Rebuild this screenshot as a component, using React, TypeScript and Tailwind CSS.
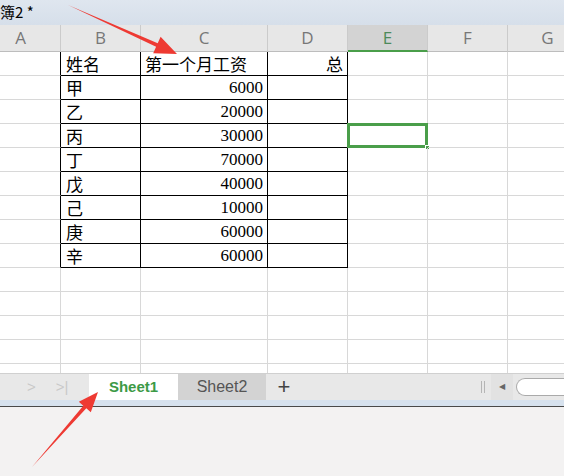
import React from "react";

const cols = [
  { name: "A", w: 80 },
  { name: "B", w: 80 },
  { name: "C", w: 127 },
  { name: "D", w: 80 },
  { name: "E", w: 80 },
  { name: "F", w: 80 },
  { name: "G", w: 80 },
];

const data: string[][] = [
  ["姓名", "第一个月工资", "总"],
  ["甲", "6000"],
  ["乙", "20000"],
  ["丙", "30000"],
  ["丁", "70000"],
  ["戊", "40000"],
  ["己", "10000"],
  ["庚", "60000"],
  ["辛", "60000"],
];

const ROWS = 14;
const cjk = "font-['Noto_Sans_CJK_SC',sans-serif]";

// table sits on columns B..D, rows 0..8
const inTable = (r: number, c: number) => r >= 0 && r <= 8 && c >= 1 && c <= 3;

function Cell({ r, c }: { r: number; c: number }) {
  const rightBlack = inTable(r, c) || inTable(r, c + 1);
  const bottomBlack = inTable(r, c) || inTable(r + 1, c);
  const row = data[r];
  let content: React.ReactNode = null;
  if (row && c === 1) {
    content = <span className={`${cjk} pl-[5px] text-[17px] leading-none text-black`}>{row[0]}</span>;
  } else if (row && c === 2) {
    content =
      r === 0 ? (
        <span className={`${cjk} pl-[4px] text-[17px] leading-none text-black`}>{row[1]}</span>
      ) : (
        <span className="ml-auto pr-[4px] font-['Liberation_Serif',serif] text-[17px] leading-none text-black">
          {row[1]}
        </span>
      );
  } else if (row && c === 3 && r === 0) {
    content = <span className={`${cjk} ml-auto pr-[4px] text-[17px] leading-none text-black`}>{row[2]}</span>;
  }
  const selected = r === 3 && c === 4;
  return (
    <div
      className={`relative flex h-[24px] shrink-0 items-end pb-[3px] border-r border-b ${
        rightBlack ? "border-r-black" : "border-r-[#d8d8d8]"
      } ${bottomBlack ? "border-b-black" : "border-b-[#d8d8d8]"}`}
      style={{ width: cols[c].w }}
    >
      {content}
      {selected ? (
        <>
          <div className="absolute -left-[1px] -top-[1px] h-[25px] w-[81px] border-[3px] border-[#4a9e4a]" />
          <div className="absolute -bottom-[3px] -right-[3px] h-[5px] w-[5px] border border-white bg-[#4a9e4a]" />
        </>
      ) : null}
    </div>
  );
}

export default function App() {
  return (
    <div className="relative h-[476px] w-[564px] overflow-hidden bg-[#f3f2f2] font-['Liberation_Sans',sans-serif]">
      {/* title bar */}
      <div className="flex h-[25px] items-center bg-gradient-to-b from-[#dfe6ef] to-[#d6dfea]">
        <span className={`${cjk} ml-0 text-[15px] text-black`}>簿2 *</span>
      </div>

      {/* column headers */}
      <div className="ml-[-19px] flex h-[27px] bg-[#e7e7e7]">
        {cols.map((col) => {
          const sel = col.name === "E";
          return (
            <div
              key={col.name}
              className={`flex shrink-0 items-center justify-center border-r border-r-[#cbcbcb] ${
                sel ? "border-b-[2px] border-b-[#4a9e4a] bg-[#d3d3d3] text-[#4d8a5a]" : "border-b border-b-[#bdbdbd] text-[#777]"
              } font-['Open_Sans',sans-serif] text-[17px]`}
              style={{ width: col.w }}
            >
              {col.name}
            </div>
          );
        })}
      </div>

      {/* grid */}
      <div className="ml-[-19px] flex h-[321px] flex-col overflow-hidden bg-white">
        {Array.from({ length: ROWS }, (_, r) => (
          <div key={r} className="flex">
            {cols.map((_, c) => (
              <Cell key={c} r={r} c={c} />
            ))}
          </div>
        ))}
      </div>

      {/* sheet tab bar */}
      <div className="flex h-[27px] items-stretch border-t border-t-[#d0d0d0] bg-[#e8e8e8]">
        <div className="flex w-[89px] items-center gap-[20px] pl-[27px] text-[15px] text-[#c9c9c9]">
          <span>&gt;</span>
          <span>&gt;|</span>
        </div>
        <div className="flex w-[89px] items-center justify-center bg-white text-[15px] font-bold text-[#3c9a46]">
          Sheet1
        </div>
        <div className="flex w-[88px] items-center justify-center bg-[#d3d3d3] text-[16px] text-[#555]">Sheet2</div>
        <div className="flex w-[36px] items-center justify-center text-[22px] font-light leading-none text-[#444]">
          +
        </div>
        <div className="flex-1" />
        <div className="flex items-center gap-[2px] pr-[6px]">
          <div className="h-[12px] w-[1px] bg-[#b5b5b5]" />
          <div className="h-[12px] w-[1px] bg-[#b5b5b5]" />
        </div>
        <div className="flex w-[22px] items-center justify-center bg-[#e2e2e2] text-[8px] text-[#666]">◀</div>
        <div className="flex items-center pl-[3px]">
          <div className="h-[18px] w-[48px] rounded-l-full border border-r-0 border-[#aaa] bg-white" />
        </div>
      </div>
      <div className="h-[6px] bg-[#d7e2ee]" />
      <div className="h-[1px] bg-[#4a4a4a]" />

      {/* red annotation arrows */}
      <svg className="pointer-events-none absolute left-0 top-0" width="564" height="476">
        <polygon
          points="68,5 157.7,43.2 160.6,36.8 177,54 153.2,53.2 156.1,46.8"
          fill="#ee3a33"
        />
        <polygon
          points="32,467 86.3,408.3 90.8,412.3 98,392 78.8,401.7 83.3,405.7"
          fill="#ee3a33"
        />
      </svg>
    </div>
  );
}
